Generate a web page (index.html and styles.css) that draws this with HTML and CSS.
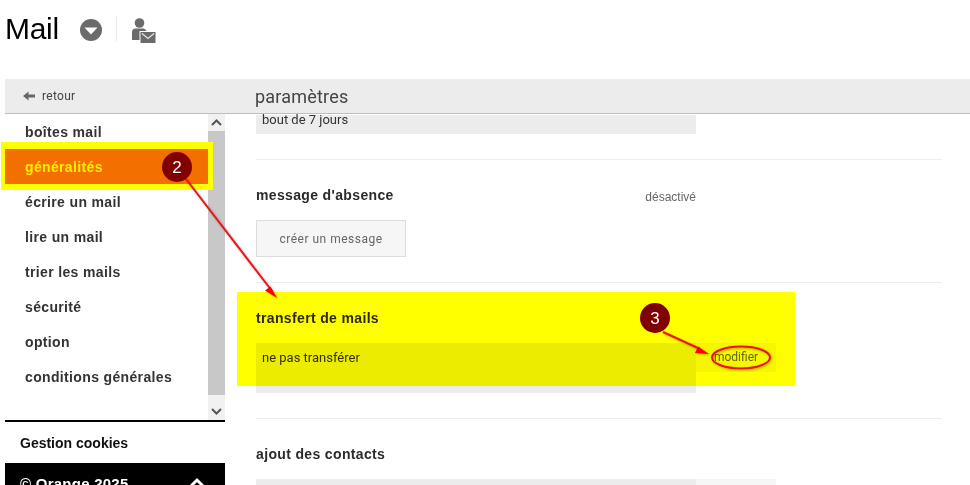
FILE: index.html
```html
<!DOCTYPE html>
<html lang="fr">
<head>
    <meta charset="UTF-8">
    <title>Mail - paramètres</title>
    <link rel="stylesheet" href="styles.css">
</head>
<body>
    <header class="top-bar">
        <h1 class="app-title">Mail</h1>
        <svg class="icon-menu" width="22" height="22" viewBox="0 0 22 22">
            <circle cx="11" cy="11" r="11" fill="#6b6b6b"/>
            <path d="M4.5 8.5h13L11 15.5z" fill="#fff"/>
        </svg>
        <span class="top-sep"></span>
        <svg class="icon-contact" width="25" height="26" viewBox="0 0 25 26">
            <circle cx="8.500" cy="5" r="4.800" fill="#6b6b6b"/>
            <path d="M1 22V14q0-3.500 3.500-3.500h8q2 0 3 2.500H8.500v9z" fill="#6b6b6b"/>
            <rect x="9.500" y="14" width="15" height="11" fill="#6b6b6b"/>
            <path d="M11 15.500l6 5 6-5" fill="none" stroke="#e4e4e4" stroke-width="1.300"/>
        </svg>
    </header>

    <div class="toolbar">
        <a class="back-link">
            <svg width="12" height="10" viewBox="0 0 12 10"><path d="M0 5l5.500-4.500v3H12v3H5.500v3z" fill="#666"/></svg>
            retour
        </a>
        <div class="page-title">paramètres</div>
    </div>

    <div class="content">
        <aside class="sidebar">
            <div class="nav-wrap">
                <ul class="nav-list">
                    <li class="nav-item">boîtes mail</li>
                    <li class="nav-item active">généralités</li>
                    <li class="nav-item">écrire un mail</li>
                    <li class="nav-item">lire un mail</li>
                    <li class="nav-item">trier les mails</li>
                    <li class="nav-item">sécurité</li>
                    <li class="nav-item">option</li>
                    <li class="nav-item">conditions générales</li>
                </ul>
                <div class="scrollbar">
                    <div class="scroll-btn">
                        <svg width="11" height="7" viewBox="0 0 11 7"><path d="M1 6l4.500-4.500L10 6" fill="none" stroke="#555" stroke-width="2"/></svg>
                    </div>
                    <div class="scroll-thumb"></div>
                    <div class="scroll-btn scroll-btn-end">
                        <svg width="11" height="7" viewBox="0 0 11 7"><path d="M1 1l4.500 4.500L10 1" fill="none" stroke="#555" stroke-width="2"/></svg>
                    </div>
                </div>
            </div>
            <div class="cookies">Gestion cookies</div>
            <div class="copyright">
                <span>© Orange 2025</span>
                <svg width="16" height="10" viewBox="0 0 16 10"><path d="M2 9l6-6 6 6" fill="none" stroke="#fff" stroke-width="3"/></svg>
            </div>
        </aside>

        <main class="settings">
            <section class="setting setting-first">
                <div class="value-box value-cut">bout de 7 jours</div>
            </section>

            <section class="setting">
                <div class="setting-head">
                    <h2 class="setting-title">message d'absence</h2>
                    <span class="setting-state">désactivé</span>
                </div>
                <button class="btn-create">créer un message</button>
            </section>

            <section class="setting">
                <div class="setting-head">
                    <h2 class="setting-title">transfert de mails</h2>
                </div>
                <div class="value-row">
                    <div class="value-box">ne pas transférer</div>
                    <div class="value-action">modifier</div>
                </div>
            </section>

            <section class="setting">
                <div class="setting-head">
                    <h2 class="setting-title">ajout des contacts</h2>
                </div>
                <div class="value-row">
                    <div class="value-box"></div>
                    <div class="value-action"></div>
                </div>
            </section>
        </main>
    </div>

    <!-- annotations drawn over the screenshot -->
    <div class="mark-frame"></div>
    <div class="mark-yellow"></div>
    <svg class="mark-arrows" width="970" height="485" viewBox="0 0 970 485">
        <defs>
            <filter id="soft" x="-20%" y="-20%" width="150%" height="150%">
                <feDropShadow dx="1" dy="1" stdDeviation="1" flood-color="#000" flood-opacity=".3"/>
            </filter>
        </defs>
        <g filter="url(#soft)">
            <path d="M186 179L272 291" stroke="#e8141c" stroke-width="2" fill="none"/>
            <path d="M277 298l-12-7.500 5.500-4z" fill="#f00"/>
            <path d="M663 332L700 349" stroke="#e8141c" stroke-width="2" fill="none"/>
            <path d="M709 354l-14-1 3-6.500z" fill="#f00"/>
            <ellipse cx="741" cy="357.500" rx="29" ry="11" fill="none" stroke="#e8141c" stroke-width="2"/>
        </g>
        <circle cx="177" cy="167" r="15" fill="#800000"/>
        <circle cx="655" cy="318" r="15" fill="#800000"/>
        <text x="177" y="173" class="mark-num">2</text>
        <text x="655" y="324" class="mark-num">3</text>
    </svg>
</body>
</html>
```

FILE: styles.css
```css
html, body {
    margin: 0;
    height: 485px;
    overflow: hidden;
}

body {
    position: relative;
    background: #fff;
    font-family: 'Liberation Sans', Arial, sans-serif;
    color: #2b2b2b;
}

.top-bar {
    height: 79px;
    display: flex;
    align-items: flex-start;
    padding-left: 5px;
    box-sizing: border-box;
}

.app-title {
    margin: 11px 0 0;
    font-size: 30px;
    line-height: 36px;
    font-weight: normal;
    color: #000;
    letter-spacing: -0.3px;
}

.icon-menu {
    margin: 19px 0 0 21px;
}

.top-sep {
    width: 1px;
    height: 25px;
    margin: 16px 0 0 14px;
    background: #e8e8e8;
}

.icon-contact {
    margin: 18px 0 0 14px;
}

.toolbar {
    height: 34px;
    margin-left: 5px;
    display: flex;
    align-items: center;
    background: #ececec;
    border-bottom: 1px solid #bdbdbd;
}

.back-link {
    width: 250px;
    padding-left: 18px;
    box-sizing: border-box;
    display: flex;
    align-items: center;
    gap: 7px;
    font-family: Roboto, sans-serif;
    font-size: 12px;
    letter-spacing: 0.3px;
    color: #444;
}

.page-title {
    font-family: Roboto, sans-serif;
    font-size: 18px;
    letter-spacing: 0.2px;
    color: #444;
}

.content {
    display: flex;
    height: 371px;
}

.sidebar {
    width: 220px;
    margin-left: 5px;
    flex: none;
    display: flex;
    flex-direction: column;
}

.nav-wrap {
    height: 306px;
    display: flex;
    flex: none;
}

.nav-list {
    list-style: none;
    margin: 0;
    padding: 0;
    width: 203px;
}

.nav-item {
    height: 35px;
    line-height: 37px;
    padding-left: 20px;
    font-size: 14px;
    font-weight: bold;
    letter-spacing: 0.35px;
    color: #333;
}

.nav-item.active {
    background: #f37000;
    color: #ffee00;
    position: relative;
}

.scrollbar {
    width: 17px;
    display: flex;
    flex-direction: column;
    background: #f1f1f1;
}

.scroll-btn {
    height: 17px;
    display: flex;
    align-items: center;
    justify-content: center;
}

.scroll-btn-end {
    height: 25px;
    align-items: flex-end;
    padding-bottom: 5px;
    box-sizing: border-box;
}

.scroll-thumb {
    flex: 1;
    background: #c8c8c8;
}

.cookies {
    height: 41px;
    line-height: 43px;
    border-top: 2px solid #000;
    padding-left: 15px;
    font-size: 14px;
    font-weight: bold;
    color: #111;
}

.copyright {
    flex: 1;
    background: #000;
    color: #fff;
    padding: 12px 20px 0 15px;
    display: flex;
    justify-content: space-between;
    align-items: flex-start;
    font-size: 15px;
    font-weight: bold;
    letter-spacing: 0.25px;
}

.copyright svg {
    margin-top: 2px;
}

.settings {
    width: 717px;
    padding-left: 31px;
    box-sizing: border-box;
    overflow: hidden;
}

.setting {
    padding: 26px 0 25px;
    border-bottom: 1px solid #eee;
}

.setting-first {
    padding-top: 1px;
}

.setting-head {
    width: 440px;
    display: flex;
    justify-content: space-between;
    align-items: center;
    height: 18px;
    margin-bottom: 16px;
}

.setting-title {
    margin: 0;
    font-size: 14px;
    font-weight: bold;
    letter-spacing: 0.35px;
    color: #2b2b2b;
}

.setting-state {
    padding-top: 4px;
    font-size: 12px;
    color: #666;
}

.btn-create {
    display: block;
    width: 150px;
    height: 37px;
    padding: 0;
    background: #f6f6f6;
    border: 1px solid #ddd;
    font-family: Roboto, sans-serif;
    font-size: 12px;
    letter-spacing: 0.5px;
    color: #666;
}

.value-row {
    display: flex;
}

.value-box {
    width: 440px;
    height: 50px;
    padding: 7px 6px 6px;
    box-sizing: border-box;
    background: #ececec;
    font-family: Roboto, sans-serif;
    font-size: 13px;
    line-height: 16px;
    color: #333;
}

.value-cut {
    height: 19px;
    padding-top: 0;
    line-height: 9px;
}

.value-action {
    width: 80px;
    height: 29px;
    line-height: 29px;
    text-align: center;
    background: #f6f6f6;
    font-family: Roboto, sans-serif;
    font-size: 12px;
    color: #666;
}

/* annotations */
.mark-frame {
    position: absolute;
    left: 1px;
    top: 142px;
    width: 212px;
    height: 48px;
    box-sizing: border-box;
    border: solid #ff0;
    border-width: 7px 5px 6px 4px;
}

.mark-yellow {
    position: absolute;
    left: 237px;
    top: 292px;
    width: 558px;
    height: 94px;
    background: #ff0;
    mix-blend-mode: multiply;
}

.mark-arrows {
    position: absolute;
    left: 0;
    top: 0;
}

.mark-num {
    font-family: 'Liberation Sans', Arial, sans-serif;
    font-size: 17px;
    fill: #fff;
    text-anchor: middle;
}
```
